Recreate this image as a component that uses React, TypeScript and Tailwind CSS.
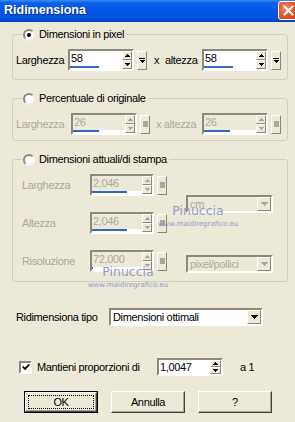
import React from "react";

const sunken =
  "border-2 border-t-[#8c897b] border-l-[#8c897b] border-b-white border-r-white";
const raised =
  "border border-t-white border-l-white border-b-[#8c897b] border-r-[#8c897b]";

function Tri({ up, color }: { up?: boolean; color: string }) {
  // crisp 5x3 triangle
  return (
    <svg width="5" height="3" viewBox="0 0 5 3" shapeRendering="crispEdges">
      {up ? (
        <>
          <rect x="2" y="0" width="1" height="1" fill={color} />
          <rect x="1" y="1" width="3" height="1" fill={color} />
          <rect x="0" y="2" width="5" height="1" fill={color} />
        </>
      ) : (
        <>
          <rect x="0" y="0" width="5" height="1" fill={color} />
          <rect x="1" y="1" width="3" height="1" fill={color} />
          <rect x="2" y="2" width="1" height="1" fill={color} />
        </>
      )}
    </svg>
  );
}

function Radio({ checked }: { checked?: boolean }) {
  return (
    <span className="flex h-[12px] w-[12px] shrink-0 items-center justify-center rounded-full border-2 border-t-[#8c897b] border-l-[#8c897b] border-b-[#f4f3ee] border-r-[#f4f3ee] bg-white">
      {checked && <span className="h-[4px] w-[4px] rounded-full bg-black" />}
    </span>
  );
}

function SpinField({
  value,
  bar,
  disabled = false,
  boxW = "w-[66px]",
}: {
  value: string;
  bar: number;
  disabled?: boolean;
  boxW?: string;
}) {
  const ink = disabled ? "#aca899" : "#000000";
  return (
    <div className="flex shrink-0 items-center gap-[3px]">
      <div className={`flex h-[22px] ${boxW} ${sunken}`}>
        <div className={`flex flex-1 flex-col ${disabled ? "bg-[#ece9d8]" : "bg-white"}`}>
          <span className={`flex-1 pl-[1px] leading-[15px] ${disabled ? "text-[#aca899]" : "text-black"}`}>
            {value}
          </span>
          <div className="h-[3px] bg-white">
            <div className="h-[2px] bg-[#316ac5]" style={{ width: bar }} />
          </div>
        </div>
        <div className="flex w-[10px] flex-col">
          <div className={`flex h-[9px] items-center justify-center bg-[#ece9d8] ${raised}`}>
            <Tri up color={ink} />
          </div>
          <div className={`flex h-[9px] items-center justify-center bg-[#ece9d8] ${raised}`}>
            <Tri color={ink} />
          </div>
        </div>
      </div>
      <div className={`flex h-[19px] w-[10px] flex-col items-center justify-center gap-[1px] bg-[#ece9d8] ${raised}`}>
        {disabled ? (
          <span className="h-[6px] w-[5px] bg-[#aca899]" />
        ) : (
          <>
            <span className="h-[1px] w-[6px] bg-black" />
            <Tri color="#000000" />
          </>
        )}
      </div>
    </div>
  );
}

function Combo({ value, disabled = false, w }: { value: string; disabled?: boolean; w: string }) {
  const ink = disabled ? "#aca899" : "#000000";
  return (
    <div className={`flex h-[18px] shrink-0 items-center ${w} ${sunken} ${disabled ? "bg-[#ece9d8]" : "bg-white"}`}>
      <span className={`flex-1 pl-[2px] leading-[14px] ${disabled ? "text-[#aca899]" : "text-black"}`}>{value}</span>
      <div className={`flex h-[14px] w-[14px] items-center justify-center bg-[#ece9d8] ${raised}`}>
        <svg width="7" height="4" viewBox="0 0 7 4" shapeRendering="crispEdges">
          <rect x="0" y="0" width="7" height="1" fill={ink} />
          <rect x="1" y="1" width="5" height="1" fill={ink} />
          <rect x="2" y="2" width="3" height="1" fill={ink} />
          <rect x="3" y="3" width="1" height="1" fill={ink} />
        </svg>
      </div>
    </div>
  );
}

function Group({
  label,
  checked,
  className = "",
  children,
}: {
  label: string;
  checked?: boolean;
  className?: string;
  children: React.ReactNode;
}) {
  return (
    <fieldset className={`rounded-[3px] border border-[#d0d0bf] ${className}`}>
      <legend className="ml-[9px] pl-[1px] pr-[2px]">
        <span className="flex items-center gap-[4px] leading-[13px]">
          <Radio checked={checked} />
          {label}
        </span>
      </legend>
      {children}
    </fieldset>
  );
}

function Button({ children, primary }: { children: React.ReactNode; primary?: boolean }) {
  return (
    <div className={`flex h-[22px] w-[74px] ${primary ? "border border-black" : ""}`}>
      <div className="flex flex-1 border border-t-white border-l-white border-b-[#404040] border-r-[#404040] bg-[#ece9d8] p-[2px] shadow-[inset_-1px_-1px_#aca899]">
        <span
          className={`flex flex-1 items-center justify-center leading-[13px] ${
            primary ? "border border-dotted border-black" : ""
          }`}
        >
          {children}
        </span>
      </div>
    </div>
  );
}

export default function App() {
  return (
    <div className="relative h-[422px] w-[295px] overflow-hidden bg-[#ece9d8] font-['Liberation_Sans',Arial,sans-serif] text-[11px] tracking-[-0.35px] text-black">
      {/* Title bar */}
      <div className="flex h-[22px] items-center overflow-hidden border-b border-[#0a3fb8] bg-[linear-gradient(180deg,#3a8df6_0%,#0b60ea_14%,#0056e6_50%,#0051df_85%,#0046cc_100%)]">
        <span className="pl-[4px] text-[12.5px] font-bold tracking-normal text-white [text-shadow:1px_1px_0_#0a2a8a]">
          Ridimensiona
        </span>
        <div className="-mr-[4px] ml-auto flex h-[19px] w-[21px] shrink-0 items-center justify-center rounded-[3px] border border-white bg-[radial-gradient(circle_at_35%_35%,#f08a6a_0%,#e2582f_45%,#c93a14_100%)]">
          <svg width="11" height="11" viewBox="0 0 11 11">
            <path d="M1.5 1.5 L9.5 9.5 M9.5 1.5 L1.5 9.5" stroke="white" strokeWidth="2" strokeLinecap="square" />
          </svg>
        </div>
      </div>

      <div className="pl-[12px] pr-[7px] pt-[6px]">
        {/* Dimensioni in pixel */}
        <Group label="Dimensioni in pixel" checked>
          <div className="flex items-center pl-[3px] pt-[8px] pb-[8px]">
            <span className="w-[52px] shrink-0">Larghezza</span>
            <SpinField value="58" bar={29} />
            <span className="ml-[7px] w-[11px] shrink-0">x</span>
            <span className="w-[37px] shrink-0">altezza</span>
            <SpinField value="58" bar={29} />
          </div>
        </Group>

        {/* Percentuale di originale */}
        <Group label="Percentuale di originale" className="mt-[12px]">
          <div className="flex items-center pl-[3px] pt-[8px] pb-[5px] text-[#aca899]">
            <span className="w-[55px] shrink-0">Larghezza</span>
            <SpinField value="26" bar={26} disabled />
            <span className="ml-[6px] w-[46px] shrink-0">x altezza</span>
            <SpinField value="26" bar={26} disabled />
          </div>
        </Group>

        {/* Dimensioni attuali/di stampa */}
        <Group label="Dimensioni attuali/di stampa" className="mt-[12px]">
          <div className="flex pl-[9px] pt-[8px] pb-[8px] text-[#aca899]">
            <div className="flex flex-col gap-[16px]">
              <div className="flex items-center">
                <span className="w-[68px] shrink-0">Larghezza</span>
                <SpinField value="2,046" bar={35} disabled boxW="w-[64px]" />
              </div>
              <div className="flex items-center">
                <span className="w-[68px] shrink-0">Altezza</span>
                <SpinField value="2,046" bar={35} disabled boxW="w-[64px]" />
              </div>
              <div className="flex items-center">
                <span className="w-[68px] shrink-0">Risoluzione</span>
                <SpinField value="72,000" bar={1} disabled boxW="w-[64px]" />
              </div>
            </div>
            <div className="ml-[19px] flex flex-col pt-[21px]">
              <Combo value="cm" disabled w="w-[87px]" />
              <div className="mt-[42px]">
                <Combo value="pixel/pollici" disabled w="w-[87px]" />
              </div>
            </div>
          </div>
        </Group>

        {/* Ridimensiona tipo */}
        <div className="mt-[26px] flex items-center pl-[4px]">
          <span className="w-[93px] shrink-0">Ridimensiona tipo</span>
          <Combo value="Dimensioni ottimali" w="w-[154px]" />
        </div>

        {/* Mantieni proporzioni */}
        <div className="mt-[32px] flex items-center pl-[7px]">
          <span className={`flex h-[13px] w-[13px] shrink-0 items-center justify-center bg-white ${sunken}`}>
            <svg width="8" height="8" viewBox="0 0 8 8">
              <path d="M0.8 3.6 L3 5.9 L7.3 1.3" fill="none" stroke="black" strokeWidth="1.7" />
            </svg>
          </span>
          <span className="ml-[5px] w-[120px] shrink-0">Mantieni proporzioni di</span>
          <div className={`flex h-[18px] w-[66px] shrink-0 bg-white ${sunken}`}>
            <span className="flex-1 pl-[1px] leading-[14px]">1,0047</span>
            <div className="flex w-[11px] flex-col">
              <div className={`flex h-[7px] items-center justify-center bg-[#ece9d8] ${raised}`}>
                <Tri up color="#000000" />
              </div>
              <div className={`flex h-[7px] items-center justify-center bg-[#ece9d8] ${raised}`}>
                <Tri color="#000000" />
              </div>
            </div>
          </div>
          <span className="ml-[17px]">a 1</span>
        </div>

        {/* Buttons */}
        <div className="mt-[15px] flex gap-[13px] pl-[12px]">
          <Button primary>OK</Button>
          <Button>Annulla</Button>
          <Button>?</Button>
        </div>
      </div>

      {/* Watermarks */}
      <div className="pointer-events-none absolute left-[150px] top-[205px] flex w-[96px] flex-col items-center font-['DejaVu_Sans',sans-serif] leading-none tracking-normal text-[#959cc6]">
        <span className="text-[12.5px]">Pinuccia</span>
        <span className="mt-[3px] text-[7px]">www.maidiregrafico.eu</span>
      </div>
      <div className="pointer-events-none absolute left-[80px] top-[266px] flex w-[96px] flex-col items-center font-['DejaVu_Sans',sans-serif] leading-none tracking-normal text-[#959cc6]">
        <span className="text-[12.5px]">Pinuccia</span>
        <span className="mt-[3px] text-[7px]">www.maidiregrafico.eu</span>
      </div>
    </div>
  );
}
